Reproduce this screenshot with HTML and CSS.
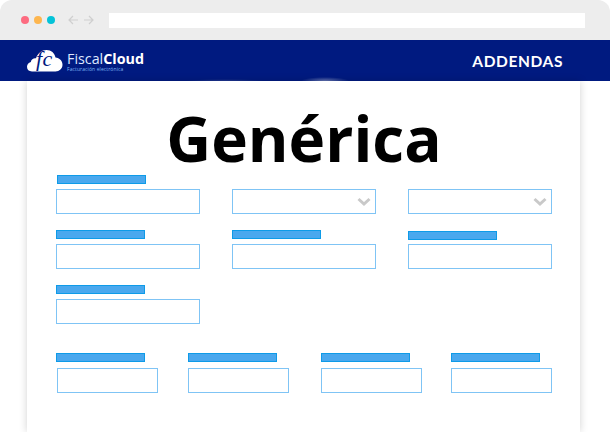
FILE: index.html
```html
<!DOCTYPE html>
<html lang="en">
<head>
    <meta charset="UTF-8">
    <meta name="viewport" content="width=device-width, initial-scale=1.0">
    <title>FiscalCloud Addendas</title>
    <link rel="stylesheet" href="styles.css">
</head>
<body>
    <div class="chrome">
        <div class="dots">
            <span class="dot dot-red"></span>
            <span class="dot dot-yellow"></span>
            <span class="dot dot-teal"></span>
        </div>
        <div class="arrows">
            <svg width="10" height="10" viewBox="0 0 10 10"><path d="M10 5H1M5 1L1 5l4 4" fill="none" stroke="#cfcfcf" stroke-width="1.2"/></svg>
            <svg width="10" height="10" viewBox="0 0 10 10"><path d="M0 5h9M5 1l4 4-4 4" fill="none" stroke="#cfcfcf" stroke-width="1.2"/></svg>
        </div>
        <div class="address"></div>
    </div>

    <header class="navbar">
        <div class="logo">
            <svg class="cloud" width="36" height="22" viewBox="0 0 36 22">
                <path d="M5 21.500C1.800 21.500 0 19.600 0 16.800c0-2.400 1.500-4.300 3.800-4.900C4.400 9.300 6.600 7.900 9 8.300 10.600 3.300 14.900 0 19.500 0c4.700 0 8.200 3.100 9 7.600 4 .4 7 3.400 7 7.200 0 3.900-3.100 6.700-7 6.700z" fill="#fff"/>
                <text x="9" y="16" class="cloud-fc">fc</text>
            </svg>
            <div class="brand">
                <div class="brand-name">Fiscal<b>Cloud</b></div>
                <div class="brand-sub">Facturación electrónica</div>
            </div>
        </div>
        <div class="nav-title">ADDENDAS</div>
    </header>

    <main class="panel">
        <h1>Genérica</h1>

        <div class="grid-three">
            <div class="field">
                <span class="label label-nudge"></span>
                <div class="input"></div>
            </div>
            <div class="field">
                <span class="label label-hidden"></span>
                <div class="input select">
                    <svg width="14" height="10" viewBox="0 0 14 10"><path d="M1.500 2l5.500 5 5.500-5" fill="none" stroke="#c9c9c9" stroke-width="3"/></svg>
                </div>
            </div>
            <div class="field">
                <span class="label label-hidden"></span>
                <div class="input select">
                    <svg width="14" height="10" viewBox="0 0 14 10"><path d="M1.500 2l5.500 5 5.500-5" fill="none" stroke="#c9c9c9" stroke-width="3"/></svg>
                </div>
            </div>
            <div class="field">
                <span class="label"></span>
                <div class="input"></div>
            </div>
            <div class="field">
                <span class="label"></span>
                <div class="input"></div>
            </div>
            <div class="field">
                <span class="label label-low"></span>
                <div class="input"></div>
            </div>
            <div class="field">
                <span class="label"></span>
                <div class="input"></div>
            </div>
        </div>

        <div class="row-four">
            <div class="field field-small">
                <span class="label"></span>
                <div class="input"></div>
            </div>
            <div class="field field-small">
                <span class="label"></span>
                <div class="input"></div>
            </div>
            <div class="field field-small">
                <span class="label"></span>
                <div class="input"></div>
            </div>
            <div class="field field-small">
                <span class="label"></span>
                <div class="input"></div>
            </div>
        </div>
    </main>
</body>
</html>
```

FILE: styles.css
```css
body {
    margin: 0;
    height: 432px;
    overflow: hidden;
    background: #fff;
    font-family: "Open Sans", sans-serif;
}

.chrome {
    height: 40px;
    display: flex;
    align-items: center;
    padding: 0 25px 0 21px;
    box-sizing: border-box;
    background: #ededed;
    border-radius: 12px 12px 0 0;
}
.dots {
    display: flex;
    gap: 5px;
}
.dot {
    width: 8px;
    height: 8px;
    border-radius: 50%;
}
.dot-red { background: #fd6b80; }
.dot-yellow { background: #fdb64f; }
.dot-teal { background: #04c3d8; }
.arrows {
    display: flex;
    gap: 6px;
    margin-left: 13px;
}
.arrows svg { display: block; }
.address {
    flex: 1;
    height: 15px;
    margin-left: 15px;
    background: #fff;
}

.navbar {
    height: 41px;
    display: flex;
    align-items: center;
    justify-content: space-between;
    padding: 0 47px 0 27px;
    background:
        radial-gradient(ellipse 24px 4px at 325px 41px, rgba(255, 255, 255, .4), transparent),
        radial-gradient(ellipse 40px 2px at 225px 41px, rgba(255, 255, 255, .15), transparent),
        #001a80;
    color: #fff;
}
.logo {
    display: flex;
    align-items: center;
    gap: 4px;
}
.cloud {
    display: block;
    overflow: visible;
}
.cloud-fc {
    font-family: "Liberation Serif", serif;
    font-style: italic;
    font-size: 22px;
    letter-spacing: .5px;
    fill: #001a80;
}
.brand-name {
    font-size: 14.300px;
    line-height: 17px;
    color: #dfe8ff;
}
.brand-name b { color: #fff; }
.brand-sub {
    font-size: 5px;
    line-height: 5px;
    letter-spacing: .1px;
    color: #7fb6f2;
}
.nav-title {
    font-family: Lato, sans-serif;
    font-weight: 700;
    font-size: 15.500px;
    letter-spacing: .6px;
}

.panel {
    width: 553px;
    height: 351px;
    margin-left: 27px;
    padding: 0 28px 0 29px;
    box-sizing: border-box;
    background: #fff;
    box-shadow: 0 0 8px rgba(0, 0, 0, .18);
}
h1 {
    margin: 0;
    height: 94px;
    font-size: 62px;
    line-height: 114px;
    font-weight: 700;
    text-align: center;
    color: #000;
}

.grid-three {
    display: grid;
    grid-template-columns: repeat(3, 144px);
    column-gap: 32px;
    row-gap: 16px;
}
.label {
    display: block;
    width: 89px;
    height: 9px;
    box-sizing: border-box;
    margin-bottom: 5px;
    background: #4aa8ee;
    border: 1px solid #0e9be8;
}
.label-nudge { margin-left: 1px; }
.label-hidden { visibility: hidden; }
.label-low {
    margin-top: 1px;
    margin-bottom: 4px;
}
.input {
    height: 25px;
    box-sizing: border-box;
    display: flex;
    align-items: center;
    justify-content: flex-end;
    padding-right: 4px;
    background: #fff;
    border: 1px solid #7fc4f5;
}
.select svg { display: block; }

.row-four {
    display: flex;
    margin-top: 29px;
}
.field-small { width: 101px; }
.field-small .label { margin-bottom: 6px; }
.field-small:nth-child(1) { width: 102px; }
.field-small:nth-child(1) .input { margin-left: 1px; }
.field-small:nth-child(2) { margin-left: 30px; }
.field-small:nth-child(3) { margin-left: 32px; }
.field-small:nth-child(4) { margin-left: 29px; }
```
